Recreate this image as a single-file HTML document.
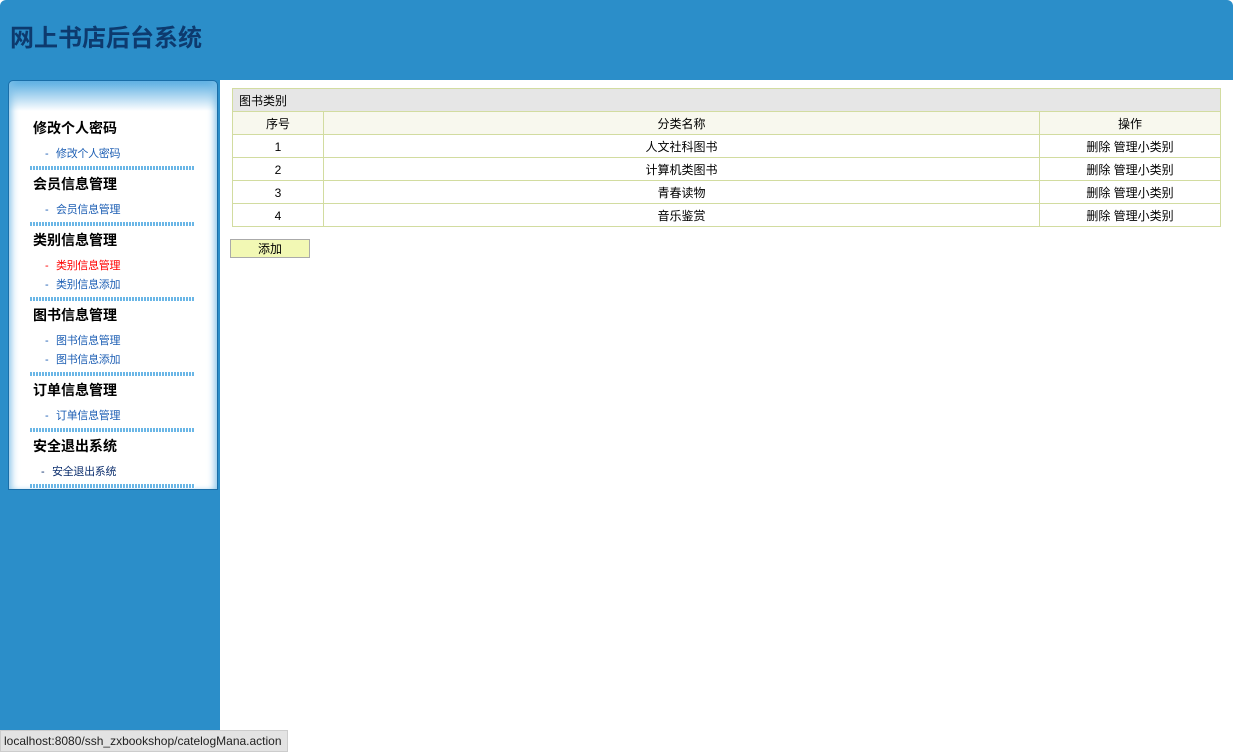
<!DOCTYPE html>
<html><head><meta charset="utf-8"><style>
*{margin:0;padding:0;box-sizing:border-box}
body{width:1233px;height:752px;background:#fff;font-family:"Liberation Sans","Noto Sans CJK SC",sans-serif;position:relative;overflow:hidden}
.top{position:absolute;left:0;top:0;width:1233px;height:80px;background:#2b8ec9;border-radius:6px 6px 0 0}
.top h1{position:absolute;left:10px;top:18px;font-size:24px;color:#0d3a6e;font-weight:bold}
.left{position:absolute;left:0;top:80px;width:220px;height:672px;background:#2b8ec9}
.panel{position:absolute;left:8px;top:80px;width:210px;height:410px;border:1px solid #1a6ea8;border-radius:5px 5px 0 0;
box-shadow:inset 6px 0 8px -4px #7fc0e8,inset -6px 0 8px -4px #7fc0e8;background:linear-gradient(#5aaee2,#fff 30px)}
.h{position:absolute;left:33px;font-size:14px;font-weight:bold;color:#000}
.l{position:absolute;left:45px;font-size:11px;color:#1e5fb4;letter-spacing:-0.3px}
.l b{display:inline-block;width:11px;font-weight:normal}
.d{position:absolute;left:30px;width:165px;height:4px;background:repeating-linear-gradient(90deg,#6ab6e6 0 2px,#fff 2px 3px)}
table{position:absolute;left:232px;top:88px;width:989px;border-collapse:collapse;font-size:12px}
td{border:1px solid #d2dca0;height:23px;text-align:center;color:#000;padding-top:1px}
.cap td{background:#e6e6e6;text-align:left;padding-left:6px}
.hd td{background:#f8f8ee}
.btn{position:absolute;left:230px;top:239px;width:80px;height:19px;background:#f2f8b4;border:1px solid #aaa;font-size:12px;text-align:center;line-height:18px}
.st{position:absolute;left:0;top:730px;width:288px;height:22px;background:#e3e3e3;border:1px solid #ccc;font-size:12px;line-height:20px;padding-left:3px;color:#222}
</style></head><body>
<div class="top"><h1>网上书店后台系统</h1></div>
<div class="left"></div>
<div class="panel"></div>
<div class="h" style="top:118px">修改个人密码</div>
<div class="l" style="top:145px"><b>-</b>修改个人密码</div>
<div class="d" style="top:166px"></div>
<div class="h" style="top:174px">会员信息管理</div>
<div class="l" style="top:201px"><b>-</b>会员信息管理</div>
<div class="d" style="top:222px"></div>
<div class="h" style="top:230px">类别信息管理</div>
<div class="l" style="top:257px;color:#f00"><b>-</b>类别信息管理</div>
<div class="l" style="top:276px"><b>-</b>类别信息添加</div>
<div class="d" style="top:297px"></div>
<div class="h" style="top:305px">图书信息管理</div>
<div class="l" style="top:332px"><b>-</b>图书信息管理</div>
<div class="l" style="top:351px"><b>-</b>图书信息添加</div>
<div class="d" style="top:372px"></div>
<div class="h" style="top:380px">订单信息管理</div>
<div class="l" style="top:407px"><b>-</b>订单信息管理</div>
<div class="d" style="top:428px"></div>
<div class="h" style="top:436px">安全退出系统</div>
<div class="l" style="top:463px;left:41px;color:#0d2f6e"><b>-</b>安全退出系统</div>
<div class="d" style="top:484px"></div>
<table>
<tr class="cap"><td colspan="3">图书类别</td></tr>
<tr class="hd"><td style="width:91px">序号</td><td>分类名称</td><td style="width:181px">操作</td></tr>
<tr><td>1</td><td>人文社科图书</td><td>删除 管理小类别</td></tr>
<tr><td>2</td><td>计算机类图书</td><td>删除 管理小类别</td></tr>
<tr><td>3</td><td>青春读物</td><td>删除 管理小类别</td></tr>
<tr><td>4</td><td>音乐鉴赏</td><td>删除 管理小类别</td></tr>
</table>
<div class="btn">添加</div>
<div class="st">localhost:8080/ssh_zxbookshop/catelogMana.action</div>
</body></html>
